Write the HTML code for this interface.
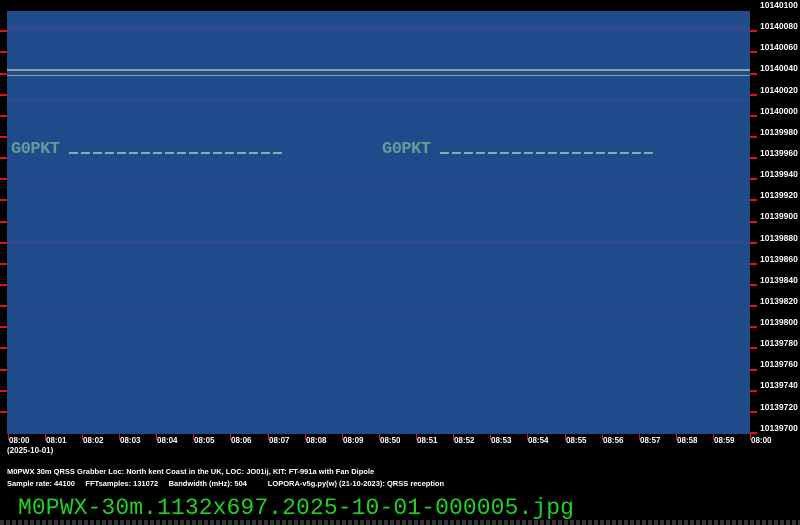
<!DOCTYPE html>
<html><head><meta charset="utf-8"><style>
body{margin:0;background:#000;width:800px;height:525px;overflow:hidden;position:relative;font-family:"Liberation Sans",sans-serif}
.plot{position:absolute;left:7px;top:11px;width:743px;height:423px;background:#1f4b8b;overflow:hidden}
.band{position:absolute;left:0;width:100%;background:#3e4a94;opacity:.55}
.hl{position:absolute;left:0;width:100%;height:2px;background:#8aa7a0}
.y{position:absolute;left:760px;font-size:8.5px;font-weight:bold;color:#fff;line-height:10px}
.rt{position:absolute;height:2px;background:#e01010}
.t{position:absolute;top:436px;font-size:8px;font-weight:bold;color:#fff;line-height:10px}
.vt{position:absolute;top:434px;width:1px;height:6px;background:#e01010}
.sig{position:absolute;font-family:"Liberation Mono",monospace;font-size:17px;font-weight:bold;color:#5f9f96;letter-spacing:-0.5px}
.dash{position:absolute;height:2px;background:#7fb0a4}
.info{position:absolute;left:7px;font-size:7.5px;font-weight:bold;color:#fff;white-space:pre}
.fn{position:absolute;left:18px;top:495px;font-family:"Liberation Mono",monospace;font-size:23px;letter-spacing:0.1px;color:#1ed21e;line-height:26px}
.chk{position:absolute;left:0;top:520px;width:800px;height:5px;background:repeating-linear-gradient(90deg,#333 0 4px,#000 4px 6px)}
</style></head><body>
<div class="plot">
<div class="band" style="top:14px;height:6px"></div>
<div class="band" style="top:88px;height:2px"></div>
<div class="band" style="top:172px;height:2px"></div>
<div class="band" style="top:230px;height:3px"></div>
<div class="band" style="top:300px;height:2px"></div>
<div class="hl" style="top:58px"></div>
<div class="hl" style="top:64px;height:1px"></div>
<div class="sig" style="left:4px;top:129px">G0PKT</div>
<div class="dash" style="left:62px;top:141px;width:216px;background:repeating-linear-gradient(90deg,#7fb0a4 0 9px,transparent 9px 12px)"></div>
<div class="sig" style="left:375px;top:129px">G0PKT</div>
<div class="dash" style="left:433px;top:141px;width:216px;background:repeating-linear-gradient(90deg,#7fb0a4 0 9px,transparent 9px 12px)"></div>
</div>
<div class="y" style="top:0px">10140100</div><div class="y" style="top:21px">10140080</div><div class="y" style="top:42px">10140060</div><div class="y" style="top:63px">10140040</div><div class="y" style="top:85px">10140020</div><div class="y" style="top:106px">10140000</div><div class="y" style="top:127px">10139980</div><div class="y" style="top:148px">10139960</div><div class="y" style="top:169px">10139940</div><div class="y" style="top:190px">10139920</div><div class="y" style="top:211px">10139900</div><div class="y" style="top:233px">10139880</div><div class="y" style="top:254px">10139860</div><div class="y" style="top:275px">10139840</div><div class="y" style="top:296px">10139820</div><div class="y" style="top:317px">10139800</div><div class="y" style="top:338px">10139780</div><div class="y" style="top:359px">10139760</div><div class="y" style="top:380px">10139740</div><div class="y" style="top:402px">10139720</div><div class="y" style="top:423px">10139700</div>
<div class="rt" style="left:0;top:30px;width:7px"></div><div class="rt" style="left:750px;top:30px;width:7px"></div>
<div class="rt" style="left:0;top:51px;width:7px"></div><div class="rt" style="left:750px;top:51px;width:7px"></div>
<div class="rt" style="left:0;top:73px;width:7px"></div><div class="rt" style="left:750px;top:73px;width:7px"></div>
<div class="rt" style="left:0;top:94px;width:7px"></div><div class="rt" style="left:750px;top:94px;width:7px"></div>
<div class="rt" style="left:0;top:115px;width:7px"></div><div class="rt" style="left:750px;top:115px;width:7px"></div>
<div class="rt" style="left:0;top:136px;width:7px"></div><div class="rt" style="left:750px;top:136px;width:7px"></div>
<div class="rt" style="left:0;top:157px;width:7px"></div><div class="rt" style="left:750px;top:157px;width:7px"></div>
<div class="rt" style="left:0;top:178px;width:7px"></div><div class="rt" style="left:750px;top:178px;width:7px"></div>
<div class="rt" style="left:0;top:199px;width:7px"></div><div class="rt" style="left:750px;top:199px;width:7px"></div>
<div class="rt" style="left:0;top:221px;width:7px"></div><div class="rt" style="left:750px;top:221px;width:7px"></div>
<div class="rt" style="left:0;top:242px;width:7px"></div><div class="rt" style="left:750px;top:242px;width:7px"></div>
<div class="rt" style="left:0;top:263px;width:7px"></div><div class="rt" style="left:750px;top:263px;width:7px"></div>
<div class="rt" style="left:0;top:284px;width:7px"></div><div class="rt" style="left:750px;top:284px;width:7px"></div>
<div class="rt" style="left:0;top:305px;width:7px"></div><div class="rt" style="left:750px;top:305px;width:7px"></div>
<div class="rt" style="left:0;top:326px;width:7px"></div><div class="rt" style="left:750px;top:326px;width:7px"></div>
<div class="rt" style="left:0;top:347px;width:7px"></div><div class="rt" style="left:750px;top:347px;width:7px"></div>
<div class="rt" style="left:0;top:369px;width:7px"></div><div class="rt" style="left:750px;top:369px;width:7px"></div>
<div class="rt" style="left:0;top:390px;width:7px"></div><div class="rt" style="left:750px;top:390px;width:7px"></div>
<div class="rt" style="left:0;top:411px;width:7px"></div><div class="rt" style="left:750px;top:411px;width:7px"></div>
<div class="rt" style="left:750px;top:432px;width:7px"></div>
<div class="vt" style="left:8px"></div><div class="t" style="left:9px">08:00</div>
<div class="vt" style="left:45px"></div><div class="t" style="left:46px">08:01</div>
<div class="vt" style="left:82px"></div><div class="t" style="left:83px">08:02</div>
<div class="vt" style="left:119px"></div><div class="t" style="left:120px">08:03</div>
<div class="vt" style="left:156px"></div><div class="t" style="left:157px">08:04</div>
<div class="vt" style="left:193px"></div><div class="t" style="left:194px">08:05</div>
<div class="vt" style="left:230px"></div><div class="t" style="left:231px">08:06</div>
<div class="vt" style="left:268px"></div><div class="t" style="left:269px">08:07</div>
<div class="vt" style="left:305px"></div><div class="t" style="left:306px">08:08</div>
<div class="vt" style="left:342px"></div><div class="t" style="left:343px">08:09</div>
<div class="vt" style="left:379px"></div><div class="t" style="left:380px">08:50</div>
<div class="vt" style="left:416px"></div><div class="t" style="left:417px">08:51</div>
<div class="vt" style="left:453px"></div><div class="t" style="left:454px">08:52</div>
<div class="vt" style="left:490px"></div><div class="t" style="left:491px">08:53</div>
<div class="vt" style="left:527px"></div><div class="t" style="left:528px">08:54</div>
<div class="vt" style="left:565px"></div><div class="t" style="left:566px">08:55</div>
<div class="vt" style="left:602px"></div><div class="t" style="left:603px">08:56</div>
<div class="vt" style="left:639px"></div><div class="t" style="left:640px">08:57</div>
<div class="vt" style="left:676px"></div><div class="t" style="left:677px">08:58</div>
<div class="vt" style="left:713px"></div><div class="t" style="left:714px">08:59</div>
<div class="vt" style="left:750px"></div><div class="t" style="left:751px">08:00</div>
<div class="t" style="left:7px;top:446px">(2025-10-01)</div>
<div class="info" style="top:467px">M0PWX 30m QRSS Grabber Loc: North kent Coast in the UK, LOC: JO01ij, KIT: FT-991a with Fan Dipole</div>
<div class="info" style="top:479px">Sample rate: 44100     FFTsamples: 131072     Bandwidth (mHz): 504          LOPORA-v5g.py(w) (21-10-2023): QRSS reception</div>
<div class="fn">M0PWX-30m.1132x697.2025-10-01-000005.jpg</div>
<div class="chk"></div>
</body></html>
